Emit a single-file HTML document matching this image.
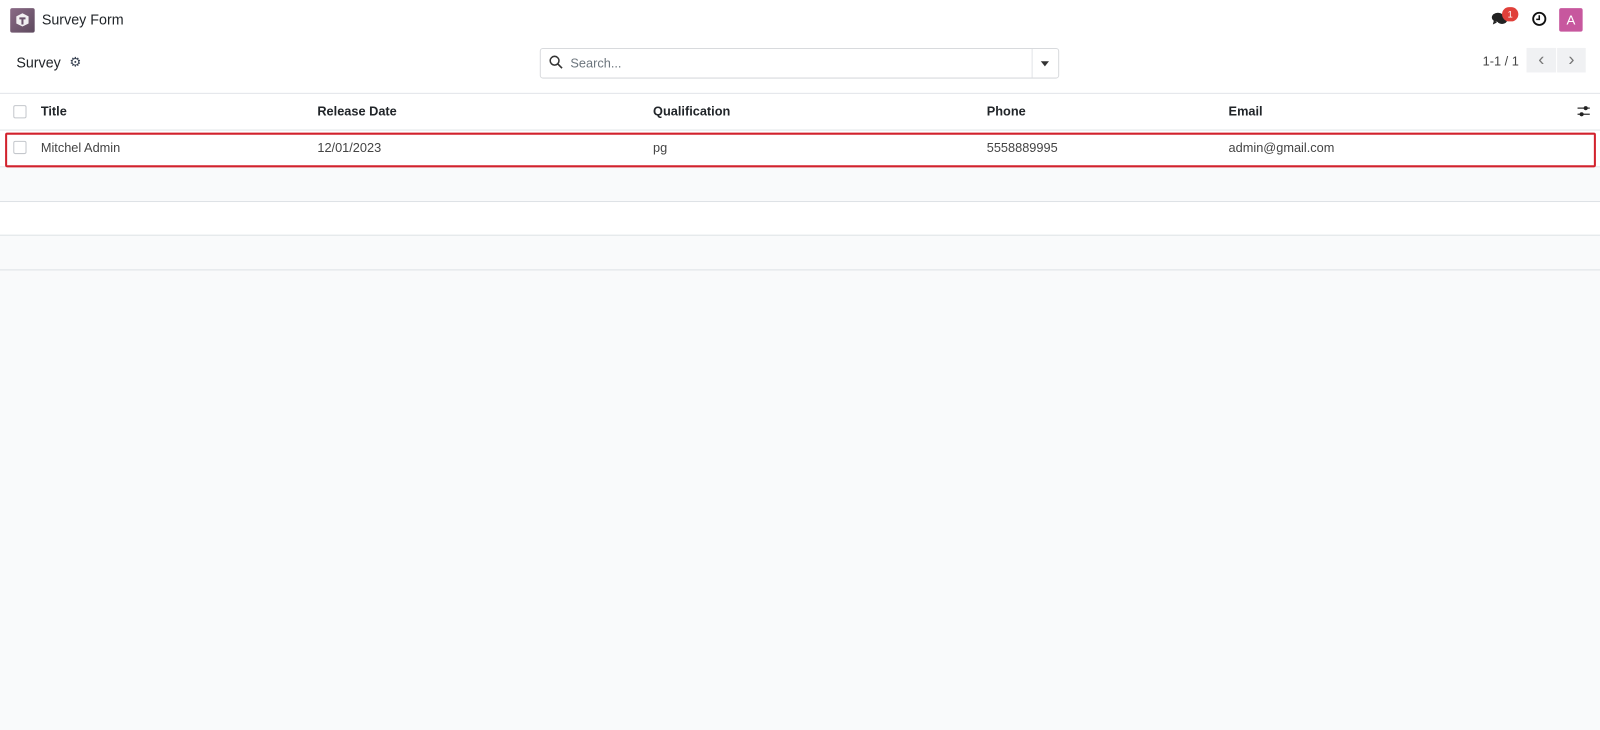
<!DOCTYPE html>
<html><head><style>
*{box-sizing:border-box;margin:0;padding:0}
body{width:1600px;height:729px;background:#f9fafb;font-family:"Liberation Sans","DejaVu Sans",sans-serif;color:#374151;overflow:hidden;font-size:12.5px}
#w{position:relative;width:1568px;height:715px;transform:scale(1.0204);transform-origin:0 0}
.abs{position:absolute}
.top{left:0;top:0;width:1568px;height:92px;background:#fff;border-bottom:1px solid #dee2e6}
.cb{width:13px;height:13px;border:1px solid #c4c7cc;border-radius:2px;background:#fff}
.th{font-weight:bold;color:#212529;top:102px}
.td{top:138px;color:#444}
</style></head><body><div id="w">
<div class="abs top"></div>
<div class="abs" style="left:10px;top:8px;width:24px;height:24px;background:linear-gradient(135deg,#8a6a86,#5e4a5e);border-radius:2px"></div>
<svg class="abs" style="left:13px;top:11px" width="18" height="18" viewBox="0 0 18 18"><path d="M3 5l6-3 6 3v7l-6 3-6-3z" fill="#fff" opacity=".9"/><path d="M6 6h6v2h-2v5h-2V8H6z" fill="#6b526b"/></svg>
<div class="abs" style="left:41px;top:11px;font-size:14px;color:#212529">Survey Form</div>
<div class="abs" style="left:16px;top:53px;font-size:14px;color:#212529">Survey</div>
<div class="abs" style="left:68px;top:53px;font-size:13px;color:#374151">⚙</div>
<div class="abs" style="left:529px;top:47px;width:509px;height:30px;border:1px solid #d8dadd;border-radius:3px;background:#fff"></div>
<div class="abs" style="left:1011px;top:48px;width:1px;height:28px;background:#e2e4e7"></div>
<svg class="abs" style="left:538px;top:54px" width="14" height="14" viewBox="0 0 14 14"><circle cx="5.5" cy="5.5" r="4.3" fill="none" stroke="#333" stroke-width="1.5"/><path d="M8.8 8.8l4 4" stroke="#333" stroke-width="1.6"/></svg>
<div class="abs" style="left:559px;top:55px;color:#6c757d">Search...</div>
<div class="abs" style="left:1020px;top:60px;border-left:4px solid transparent;border-right:4px solid transparent;border-top:5px solid #333"></div>
<svg class="abs" style="left:1461px;top:11px" width="18" height="16" viewBox="0 0 18 16"><ellipse cx="7" cy="6" rx="6" ry="4.5" fill="#222"/><path d="M3 9l-1 4 4-2z" fill="#222"/><ellipse cx="11" cy="9" rx="5" ry="3.5" fill="#222"/></svg>
<div class="abs" style="left:1472px;top:7px;width:16px;height:14px;border-radius:7px;background:#e0403a;color:#fff;font-size:9px;text-align:center;line-height:14px">1</div>
<svg class="abs" style="left:1501px;top:11px" width="15" height="15" viewBox="0 0 15 15"><circle cx="7.5" cy="7.5" r="6" fill="none" stroke="#111" stroke-width="1.8"/><path d="M7.5 4v4h-3" fill="none" stroke="#111" stroke-width="1.5"/></svg>
<div class="abs" style="left:1528px;top:8px;width:23px;height:23px;background:#c7579e;border-radius:2px;color:#fff;font-size:13px;text-align:center;line-height:23px">A</div>
<div class="abs" style="left:1453px;top:53px;color:#444">1-1 / 1</div>
<div class="abs" style="left:1496px;top:47px;width:29px;height:24px;background:#f0f1f3;color:#777;text-align:center;line-height:22px;font-size:18px">&lsaquo;</div>
<div class="abs" style="left:1526px;top:47px;width:28px;height:24px;background:#f0f1f3;color:#777;text-align:center;line-height:22px;font-size:18px">&rsaquo;</div>
<div class="abs" style="left:0;top:92px;width:1568px;height:36px;background:#fff;border-bottom:1px solid #dee2e6"></div>
<div class="abs" style="left:0;top:128px;width:1568px;height:36px;background:#fff;border-bottom:1px solid #e4e6e9"></div>
<div class="abs" style="left:0;top:197px;width:1568px;height:34px;background:#fff;border-top:1px solid #dee2e6;border-bottom:1px solid #dee2e6"></div>
<div class="abs" style="left:0;top:264px;width:1568px;height:1px;background:#dee2e6"></div>
<div class="abs" style="left:5px;top:130px;width:1559px;height:34px;border:2px solid #d2222d;border-radius:2px"></div>
<div class="abs cb" style="left:13px;top:103px"></div>
<div class="abs cb" style="left:13px;top:138px"></div>
<div class="abs th" style="left:40px">Title</div>
<div class="abs th" style="left:311px">Release Date</div>
<div class="abs th" style="left:640px">Qualification</div>
<div class="abs th" style="left:967px">Phone</div>
<div class="abs th" style="left:1204px">Email</div>
<svg class="abs" style="left:1545px;top:102px" width="14" height="14" viewBox="0 0 14 14"><path d="M1 4h12M1 10h12" stroke="#333" stroke-width="1.2"/><circle cx="9" cy="4" r="2" fill="#222"/><circle cx="5" cy="10" r="2" fill="#222"/></svg>
<div class="abs td" style="left:40px">Mitchel Admin</div>
<div class="abs td" style="left:311px">12/01/2023</div>
<div class="abs td" style="left:640px">pg</div>
<div class="abs td" style="left:967px">5558889995</div>
<div class="abs td" style="left:1204px">admin@gmail.com</div>
</div></body></html>
